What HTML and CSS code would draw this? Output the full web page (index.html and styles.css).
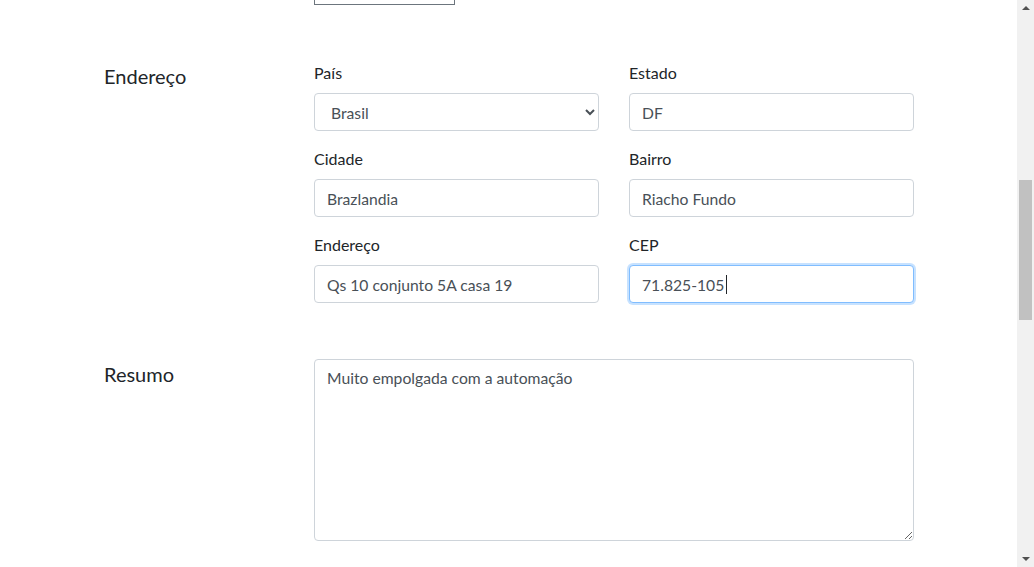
FILE: index.html
```html
<!DOCTYPE html>
<html lang="pt-BR">
<head>
<meta charset="utf-8">
<title>Formulário</title>
<link rel="stylesheet" href="styles.css">
</head>
<body>
<div class="page">
  <main class="content">
    <div class="top-row">
      <div class="spacer"></div>
      <button class="top-btn" type="button"></button>
    </div>

    <section class="section">
      <h2 class="section-title">Endereço</h2>
      <div class="fields">
        <div class="field">
          <label class="label" for="pais">País</label>
          <select id="pais" class="control">
            <option>Brasil</option>
          </select>
        </div>
        <div class="field">
          <label class="label" for="estado">Estado</label>
          <input id="estado" class="control" type="text" value="DF">
        </div>
        <div class="field">
          <label class="label" for="cidade">Cidade</label>
          <input id="cidade" class="control" type="text" value="Brazlandia">
        </div>
        <div class="field">
          <label class="label" for="bairro">Bairro</label>
          <input id="bairro" class="control" type="text" value="Riacho Fundo">
        </div>
        <div class="field">
          <label class="label" for="endereco">Endereço</label>
          <input id="endereco" class="control" type="text" value="Qs 10 conjunto 5A casa 19">
        </div>
        <div class="field">
          <label class="label" for="cep">CEP</label>
          <div class="caret-wrap">
            <input id="cep" class="control focused" type="text" value="71.825-105">
            <span class="caret"></span>
          </div>
        </div>
      </div>
    </section>

    <section class="section section-resumo">
      <h2 class="section-title">Resumo</h2>
      <div class="resumo-body">
        <textarea class="control textarea">Muito empolgada com a automação</textarea>
      </div>
    </section>
  </main>

  <aside class="scrollbar">
    <div class="arrow arrow-up"></div>
    <div class="track">
      <div class="thumb"></div>
    </div>
    <div class="arrow arrow-down"></div>
  </aside>
</div>
</body>
</html>
```

FILE: styles.css
```css
* { box-sizing: border-box; }

html, body {
  margin: 0;
  padding: 0;
  height: 100%;
  overflow: hidden;
  background: #fff;
}

body {
  font-family: Lato, "Open Sans", "Liberation Sans", sans-serif;
  color: #212529;
}

.page {
  display: flex;
  height: 567px;
}

.content {
  flex: 1;
  padding-left: 104px;
}

.top-row {
  display: grid;
  grid-template-columns: 210px 141px;
  height: 5px;
  margin-bottom: 57px;
}

.top-btn {
  display: block;
  height: 5px;
  padding: 0;
  border: 1px solid #6c757d;
  border-top: none;
  background: #fff;
}

.section {
  display: grid;
  grid-template-columns: 210px 600px;
}

.section-title {
  margin: -1px 0 0 0;
  font-size: 20px;
  font-weight: 400;
  line-height: 30px;
  color: #212529;
}

.fields {
  display: grid;
  grid-template-columns: 285px 285px;
  column-gap: 30px;
}

.field {
  display: flex;
  flex-direction: column;
  padding-bottom: 17px;
}

.label {
  font-size: 16px;
  line-height: 22px;
  margin-bottom: 9px;
  color: #212529;
}

.control {
  display: block;
  width: 100%;
  height: 38px;
  padding: 0 12px;
  font-family: Lato, "Open Sans", "Liberation Sans", sans-serif;
  font-size: 15.7px;
  color: #495057;
  background: #fff;
  border: 1px solid #ced4da;
  border-radius: 4px;
  outline: none;
}

input.control {
  padding-top: 1px;
}

select.control {
  padding-left: 12px;
  padding-top: 2px;
}

.focused {
  border-color: #80bdff;
  box-shadow: 0 0 0 2px rgba(0, 123, 255, 0.22);
}

.caret-wrap {
  position: relative;
}

.caret {
  position: absolute;
  left: 97px;
  top: 10px;
  width: 1px;
  height: 19px;
  background: #212529;
}

.section-resumo {
  margin-top: 40px;
}

.resumo-body {
  margin-top: -1px;
}

.textarea {
  height: 182px;
  padding: 6px 12px;
  line-height: 24px;
  resize: vertical;
}

.scrollbar {
  width: 17px;
  background: #f1f1f1;
  display: flex;
  flex-direction: column;
  align-items: center;
}

.arrow {
  width: 0;
  height: 0;
  border-left: 4px solid transparent;
  border-right: 4px solid transparent;
}

.arrow-up {
  margin-top: 6px;
  border-bottom: 4px solid #505050;
}

.arrow-down {
  margin-bottom: 6px;
  border-top: 4px solid #505050;
}

.track {
  flex: 1;
  width: 100%;
  padding-top: 170px;
  display: flex;
  justify-content: center;
}

.thumb {
  width: 13px;
  height: 140px;
  background: #c1c1c1;
}
```
